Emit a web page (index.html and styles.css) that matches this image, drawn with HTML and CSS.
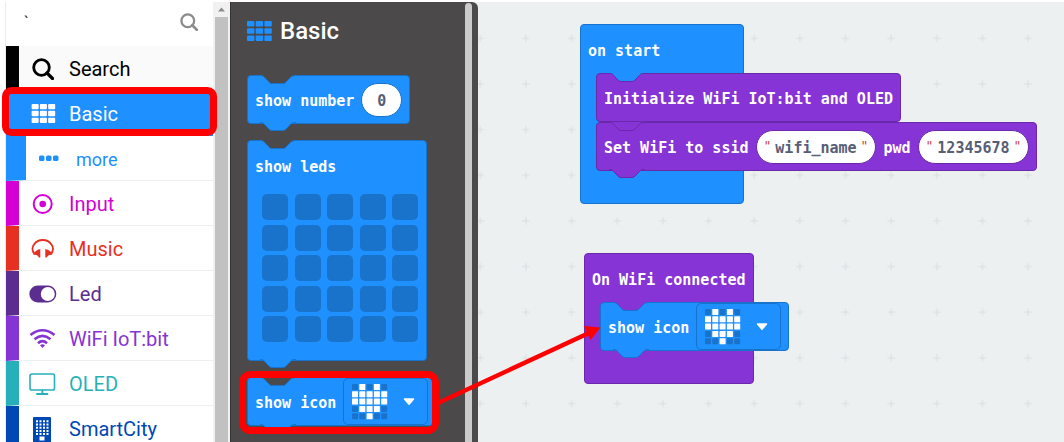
FILE: index.html
```html
<!DOCTYPE html>
<html lang="en">
<head>
<meta charset="utf-8">
<title>Block editor</title>
<link rel="stylesheet" href="styles.css">
</head>
<body>
<svg class="defs" aria-hidden="true">
  <symbol id="notch" viewBox="0 0 36 9"><path class="cut" d="M0 0H36V1C31 1 31 2 28 5L26 7Q25 8.500 23 8.500H12Q10 8.500 9 7L7 5C4 2 4 1 0 1Z"/><path class="edge" d="M0 .5H1C4 .5 4 2 7 5L9 7Q10 8.500 12 8.500H23Q25 8.500 26 7L28 5C31 2 31 .5 35 .5H36"/></symbol>
  <symbol id="heart" viewBox="0 0 36 36">
    <g fill="#1a73cb"><rect width="6" height="6" rx="1"/><rect x="14.600" width="6" height="6" rx="1"/><rect x="29.200" width="6" height="6" rx="1"/><rect y="21.900" width="6" height="6" rx="1"/><rect x="29.200" y="21.900" width="6" height="6" rx="1"/><rect y="29.200" width="6" height="6" rx="1"/><rect x="7.300" y="29.200" width="6" height="6" rx="1"/><rect x="21.900" y="29.200" width="6" height="6" rx="1"/><rect x="29.200" y="29.200" width="6" height="6" rx="1"/></g>
    <g fill="#fff"><rect x="7.300" width="6" height="6" rx=".5"/><rect x="21.900" width="6" height="6" rx=".5"/><rect y="7.300" width="6" height="6" rx=".5"/><rect x="7.300" y="7.300" width="6" height="6" rx=".5"/><rect x="14.600" y="7.300" width="6" height="6" rx=".5"/><rect x="21.900" y="7.300" width="6" height="6" rx=".5"/><rect x="29.200" y="7.300" width="6" height="6" rx=".5"/><rect y="14.600" width="6" height="6" rx=".5"/><rect x="7.300" y="14.600" width="6" height="6" rx=".5"/><rect x="14.600" y="14.600" width="6" height="6" rx=".5"/><rect x="21.900" y="14.600" width="6" height="6" rx=".5"/><rect x="29.200" y="14.600" width="6" height="6" rx=".5"/><rect x="7.300" y="21.900" width="6" height="6" rx=".5"/><rect x="14.600" y="21.900" width="6" height="6" rx=".5"/><rect x="21.900" y="21.900" width="6" height="6" rx=".5"/><rect x="14.600" y="29.200" width="6" height="6" rx=".5"/></g>
  </symbol>
  <symbol id="grid" viewBox="0 0 25 20"><g fill="currentColor"><rect width="7.400" height="5.600" rx="1"/><rect x="8.700" width="7.400" height="5.600" rx="1"/><rect x="17.400" width="7.400" height="5.600" rx="1"/><rect y="7.200" width="7.400" height="5.600" rx="1"/><rect x="8.700" y="7.200" width="7.400" height="5.600" rx="1"/><rect x="17.400" y="7.200" width="7.400" height="5.600" rx="1"/><rect y="14.400" width="7.400" height="5.600" rx="1"/><rect x="8.700" y="14.400" width="7.400" height="5.600" rx="1"/><rect x="17.400" y="14.400" width="7.400" height="5.600" rx="1"/></g></symbol>
  <symbol id="lens" viewBox="0 0 22 22"><circle cx="9.500" cy="9.500" r="7.800" fill="none" stroke="currentColor" stroke-width="2.800"/><path d="M15 15l5.500 5.500" stroke="currentColor" stroke-width="3.200" stroke-linecap="round"/></symbol>
  <symbol id="caret" viewBox="0 0 12 8"><path d="M1.500 1H10.500L6 6.200Z" fill="#fff" stroke="#fff" stroke-width="1.500" stroke-linejoin="round"/></symbol>
</svg>

<div class="editor">
  <nav class="toolbox" aria-label="Toolbox">
    <div class="search">
      <input class="search-input" type="text" value="`" aria-label="Search blocks">
      <svg class="search-icon"><use href="#lens"/></svg>
    </div>
    <button class="cat cat-search"><svg class="icon" viewBox="0 0 28 28"><use href="#lens" x="3" y="3" width="22" height="22"/></svg>Search</button>
    <button class="cat cat-basic"><svg class="icon" viewBox="0 0 28 28"><use href="#grid" x="2" y="4" width="25" height="19"/></svg>Basic</button>
    <button class="cat cat-more"><svg class="icon" viewBox="0 0 28 28"><g fill="currentColor"><rect x="3" y="10.500" width="5.500" height="5.500" rx="1.500"/><rect x="10" y="10.500" width="5.500" height="5.500" rx="1.500"/><rect x="17" y="10.500" width="5.500" height="5.500" rx="1.500"/></g></svg>more</button>
    <button class="cat cat-input"><svg class="icon" viewBox="0 0 28 28"><circle cx="13.700" cy="14" r="9" fill="none" stroke="currentColor" stroke-width="2"/><circle cx="13.700" cy="14" r="3.300" fill="currentColor"/></svg>Input</button>
    <button class="cat cat-music"><svg class="icon" viewBox="0 0 28 28"><path d="M5.500 19C3 16 3 12 5 9.500C7 6.500 10 5 13.700 5S20.500 6.500 22.500 9.500C24.500 12 24.500 16 22 19" fill="none" stroke="currentColor" stroke-width="2"/><path d="M11.300 14V22.500H9.800Q9 19.500 4.300 19.500Q6 15 11.300 14ZM16.300 14V22.500H17.800Q19 19.500 23.300 19.500Q22 15 16.300 14Z" fill="currentColor"/></svg>Music</button>
    <button class="cat cat-led"><svg class="icon" viewBox="0 0 28 28"><rect x="0.300" y="5.500" width="27" height="17" rx="8.500" fill="currentColor"/><circle cx="18.800" cy="14" r="7" fill="#fff"/></svg>Led</button>
    <button class="cat cat-wifi"><svg class="icon" viewBox="0 0 28 28"><g fill="none" stroke="currentColor" stroke-width="2.600"><path d="M1.500 10Q13.500 0.500 25.500 10"/><path d="M5.500 14.200Q13.500 7.500 21.500 14.200"/><path d="M9 18.200Q13.500 14.200 18 18.200"/></g><path d="M11 20.200Q13.500 18.500 16 20.200L13.500 23Z" fill="currentColor"/></svg>WiFi IoT:bit</button>
    <button class="cat cat-oled"><svg class="icon" viewBox="0 0 28 28"><rect x="1" y="4" width="24.500" height="16" rx="1.800" fill="none" stroke="currentColor" stroke-width="1.600"/><path d="M13.300 20.500V23.500M8 24H18.500" stroke="currentColor" stroke-width="1.800" stroke-linecap="round"/></svg>OLED</button>
    <button class="cat cat-city"><svg class="icon" viewBox="0 0 28 28"><rect x="4" y="2" width="18" height="26" rx="1" fill="currentColor"/><path d="M7 6.300H19.500M7 9.500H19.500M7 12.700H19.500M7 15.900H19.500M7 19.100H19.500" stroke="#fff" stroke-width="2" stroke-dasharray="2 1.500"/><rect x="10.500" y="21.500" width="5" height="4" fill="#fff"/></svg>SmartCity</button>
  </nav>
  <div class="scrollbar" aria-hidden="true"><svg class="scroll-arrow" viewBox="0 0 17 15"><path d="M5 9.500L8.500 5.500L12 9.500Z" fill="#8b8b8b"/></svg><div class="scroll-thumb"></div></div>

  <section class="flyout">
    <div class="shelf">
      <h1 class="title"><svg class="title-icon"><use href="#grid"/></svg>Basic</h1>
      <div class="block blue row">
        <svg class="notch"><use href="#notch"/></svg>
        <label for="num">show number</label>
        <input class="pill number" id="num" type="text" value="0">
        <svg class="bump"><use href="#notch"/></svg>
      </div>
      <div class="block blue leds">
        <svg class="notch"><use href="#notch"/></svg>
        <span>show leds</span>
        <div class="matrix">
          <input type="checkbox" aria-label="LED 1 1"><input type="checkbox" aria-label="LED 1 2"><input type="checkbox" aria-label="LED 1 3"><input type="checkbox" aria-label="LED 1 4"><input type="checkbox" aria-label="LED 1 5">
          <input type="checkbox" aria-label="LED 2 1"><input type="checkbox" aria-label="LED 2 2"><input type="checkbox" aria-label="LED 2 3"><input type="checkbox" aria-label="LED 2 4"><input type="checkbox" aria-label="LED 2 5">
          <input type="checkbox" aria-label="LED 3 1"><input type="checkbox" aria-label="LED 3 2"><input type="checkbox" aria-label="LED 3 3"><input type="checkbox" aria-label="LED 3 4"><input type="checkbox" aria-label="LED 3 5">
          <input type="checkbox" aria-label="LED 4 1"><input type="checkbox" aria-label="LED 4 2"><input type="checkbox" aria-label="LED 4 3"><input type="checkbox" aria-label="LED 4 4"><input type="checkbox" aria-label="LED 4 5">
          <input type="checkbox" aria-label="LED 5 1"><input type="checkbox" aria-label="LED 5 2"><input type="checkbox" aria-label="LED 5 3"><input type="checkbox" aria-label="LED 5 4"><input type="checkbox" aria-label="LED 5 5">
        </div>
        <svg class="bump"><use href="#notch"/></svg>
      </div>
      <div class="block blue row">
        <svg class="notch"><use href="#notch"/></svg>
        <span>show icon</span>
        <button class="picker" aria-label="Icon: heart"><svg class="heart"><use href="#heart"/></svg><svg class="caret"><use href="#caret"/></svg></button>
        <svg class="bump"><use href="#notch"/></svg>
      </div>
    </div>
    <div class="flyout-scroll"></div>
  </section>

  <main class="workspace">
    <svg class="canvas-grid" aria-hidden="true"><defs><pattern id="plus" x="-13.500" y="13.500" width="45.650" height="45.650" patternUnits="userSpaceOnUse"><path d="M22.800 19V26.600M19 22.800H26.600" stroke="#d9dddf"/></pattern></defs><rect width="100%" height="100%" fill="url(#plus)"/></svg>

    <div class="block blue event on-start">
      <div class="head">on start</div>
      <div class="stack">
        <div class="block purple row on-blue">
          <svg class="notch"><use href="#notch"/></svg>
          <span>Initialize WiFi IoT:bit and OLED</span>
        </div>
        <div class="block purple row on-purple">
          <svg class="notch"><use href="#notch"/></svg>
          <label for="ssid">Set WiFi to ssid</label>
          <span class="pill text"><i>"</i><input class="ssid" id="ssid" type="text" value="wifi_name"><i>"</i></span>
          <label for="pwd">pwd</label>
          <span class="pill text"><i>"</i><input class="pwd" id="pwd" type="text" value="12345678"><i>"</i></span>
          <svg class="bump"><use href="#notch"/></svg>
        </div>
      </div>
    </div>

    <div class="block purple event on-wifi">
      <div class="head">On WiFi connected</div>
      <div class="stack">
        <div class="block blue row on-purple">
          <svg class="notch"><use href="#notch"/></svg>
          <span>show icon</span>
          <button class="picker" aria-label="Icon: heart"><svg class="heart"><use href="#heart"/></svg><svg class="caret"><use href="#caret"/></svg></button>
          <svg class="bump"><use href="#notch"/></svg>
        </div>
      </div>
    </div>
  </main>
</div>

<svg class="marks" aria-hidden="true">
  <g fill="none" stroke="#f00">
    <rect x="5.500" y="90.500" width="208" height="42" rx="6" stroke-width="7"/>
    <rect x="242.500" y="374.500" width="193" height="56" rx="8" stroke-width="7"/>
    <path d="M438 403L590 332.500" stroke-width="4.500"/>
  </g>
  <path d="M600.500 327.500L584 326L590.500 340Z" fill="#f00"/>
</svg>
</body>
</html>
```
FILE: styles.css
```css
* { box-sizing: border-box; }
body { margin: 0; background: #fff; overflow: hidden; }
button, input { font: inherit; color: inherit; border: 0; margin: 0; padding: 0; background: none; }
.defs { position: absolute; width: 0; height: 0; }

.editor { display: flex; height: 100vh; padding: 2px 0 0 5px; }

/* Toolbox */
.toolbox { flex: none; width: 208px; border-left: 1px solid #ececec; font: 20px Roboto, sans-serif; overflow: hidden; }
.search { display: flex; align-items: center; justify-content: space-between; height: 44px; padding: 0 15px 4px 18px; }
.search-input { width: 100px; font-size: 16px; color: #333; outline: 0; }
.search-icon { width: 18px; height: 18px; color: #8c8c8c; }
.cat { display: flex; align-items: center; gap: 12px; width: 100%; height: 45px; padding: 2px 0 0 10px; border-left: 13px solid currentColor; border-bottom: 1px solid #ecf0f1; text-align: left; }
.icon { flex: none; width: 28px; height: 28px; }
.cat-search { color: #000; background: #fafafa; }
.cat-basic { color: #fff; background: #1e90ff; border-left-color: #1e90ff; border-bottom-color: #1e90ff; }
.cat-more { color: #1e90ff; border-left-width: 20px; font-size: 18px; }
.cat-input { color: #d400d4; }
.cat-music { color: #e63022; }
.cat-led { color: #5c2d91; }
.cat-wifi { color: #8634d5; }
.cat-oled { color: #27b0ba; }
.cat-city { color: #0048b4; }

.scrollbar { display: flex; flex-direction: column; flex: none; width: 17px; background: #f1f1f1; }
.scroll-arrow { width: 17px; height: 15px; }
.scroll-thumb { flex: 1; margin: 0 2px; background: #c1c1c1; }

/* Flyout */
.flyout { display: flex; flex: none; width: 248px; padding-right: 6px; background: #4b4949; border-left: 1px solid #333; border-radius: 0 6px 0 0; overflow: hidden; z-index: 1; }
.shelf { display: flex; flex-direction: column; align-items: flex-start; gap: 16px; flex: 1; padding: 12px 0 0 16px; }
.title { display: flex; align-items: center; gap: 8px; height: 45px; margin: 0; padding-bottom: 12px; color: #fff; font: 500 24px Roboto, sans-serif; }
.title-icon { width: 25px; height: 20px; color: #1e90ff; }
.flyout-scroll { width: 7px; margin-top: 1px; border-radius: 4px 4px 0 0; background: #cbcbcb; }

/* Blocks */
.block { position: relative; flex: none; border: 1px solid var(--line); border-radius: 4px; background: var(--fill); color: #fff; font: bold 15px "DejaVu Sans Mono", monospace; white-space: nowrap; --under: #4b4949; }
.blue { --fill: #1e90ff; --line: #1873cc; }
.purple { --fill: #8634d5; --line: #6a29aa; }
.row { display: flex; align-items: center; gap: 7px; width: max-content; height: 49px; padding: 0 7px; }
.row > span:not(.pill), .row > label { padding-top: 2px; }
.notch, .bump { position: absolute; left: 12px; width: 36px; height: 9px; stroke-width: 1; }
.notch { top: -1px; fill: var(--under); stroke: var(--line); }
.bump { top: calc(100% - 1px); fill: var(--fill); stroke: var(--line); z-index: 1; }
.cut { stroke: none; }
.edge { fill: none; }
.on-blue { --under: #1e90ff; }
.on-purple { --under: #8634d5; }

.pill { border: 1px solid var(--line); border-radius: 17px; height: 34px; background: #fff; color: #575e75; text-align: center; }
.number { width: 41px; padding-top: 2px; }
.text { display: flex; align-items: center; gap: 4px; padding: 2px 7px 0; }
.text i { color: #c44; font: 13px "DejaVu Sans Mono", monospace; padding-bottom: 4px; }
.ssid { width: 9ch; }
.pwd { width: 8ch; }

.leds { width: 180px; padding: 17px 8px 18px 7px; }
.matrix { display: grid; grid-template-columns: repeat(5, 26px); grid-auto-rows: 26px; justify-content: space-between; align-content: space-between; height: 166px; padding: 18px 0 0 7px; }
.matrix input { appearance: none; width: 26px; height: 26px; border-radius: 5px; background: #1a73cb; }
.matrix input:checked { background: #fff; }

.picker { display: flex; align-items: center; justify-content: space-between; width: 85px; height: 47px; padding: 0 12px 0 8px; border: 1px solid #1873cc; border-radius: 5px; }
.heart { width: 36px; height: 36px; }
.caret { width: 12px; height: 8px; }

/* Workspace */
.workspace { position: relative; flex: 1; margin-left: -7px; background: #ecf0f1; overflow: hidden; }
.canvas-grid { position: absolute; inset: 0; width: 100%; height: 100%; }
.event { position: absolute; padding-bottom: 32px; }
.on-start { left: 109px; top: 22px; min-width: 164px; }
.on-wifi { left: 113px; top: 251px; }
.head { padding: 0 7px; height: 48px; line-height: 52px; }
.stack { width: 0; padding-left: 15px; }

.marks { position: absolute; left: 0; top: 0; width: 100%; height: 100%; z-index: 2; pointer-events: none; }
```
